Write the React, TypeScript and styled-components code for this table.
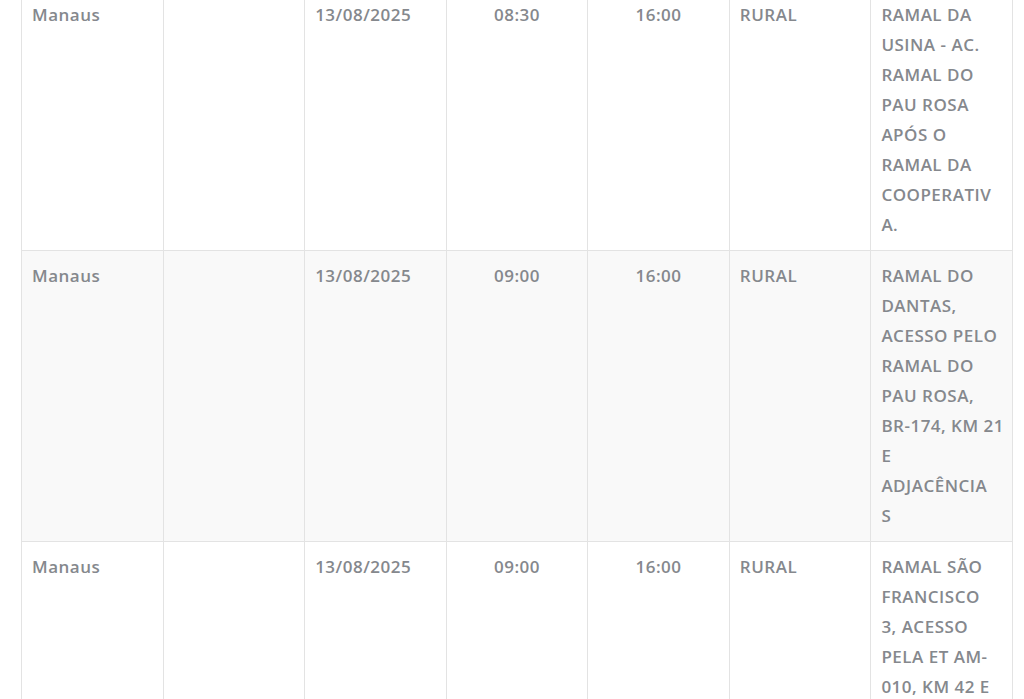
import React from "react";
import styled, { createGlobalStyle } from "styled-components";

const Global = createGlobalStyle`
  html, body { margin: 0; padding: 0; background: #ffffff; }
  body { font-family: "Open Sans", "Noto Sans", Arial, sans-serif; }
`;

const Page = styled.div`
  padding: 0 12px 0 21px;
  margin-top: -11px;
  overflow: hidden;
  height: 710px;
`;

const Table = styled.table`
  width: 992px;
  table-layout: fixed;
  border-collapse: collapse;
  font-family: "Open Sans", "Noto Sans", Arial, sans-serif;
  font-size: 17px;
  line-height: 30px;
  color: #85888d;
`;

const Row = styled.tr<{ $shaded?: boolean }>`
  background: ${(p) => (p.$shaded ? "#f9f9f9" : "#ffffff")};
`;

const Cell = styled.td<{ $center?: boolean }>`
  border: 1px solid #e3e3e3;
  padding: 10px 10px;
  vertical-align: top;
  text-align: ${(p) => (p.$center ? "center" : "left")};
  font-weight: 600;
  letter-spacing: 0.5px;
`;

const Line = styled.span`
  display: block;
  white-space: nowrap;
`;

type Entry = {
  city: string;
  date: string;
  start: string;
  end: string;
  zone: string;
  place: string[];
};

const rows: Entry[] = [
  {
    city: "Manaus",
    date: "13/08/2025",
    start: "08:30",
    end: "16:00",
    zone: "RURAL",
    place: ["RAMAL DA", "USINA - AC.", "RAMAL DO", "PAU ROSA", "APÓS O", "RAMAL DA", "COOPERATIV", "A."],
  },
  {
    city: "Manaus",
    date: "13/08/2025",
    start: "09:00",
    end: "16:00",
    zone: "RURAL",
    place: ["RAMAL DO", "DANTAS,", "ACESSO PELO", "RAMAL DO", "PAU ROSA,", "BR-174, KM 21", "E", "ADJACÊNCIA", "S"],
  },
  {
    city: "Manaus",
    date: "13/08/2025",
    start: "09:00",
    end: "16:00",
    zone: "RURAL",
    place: ["RAMAL SÃO", "FRANCISCO", "3, ACESSO", "PELA ET AM-", "010, KM 42 E", "ADJACÊNCIA", "S"],
  },
];

export default function App() {
  return (
    <>
      <Global />
      <Page>
        <Table>
          <tbody>
            {rows.map((r, i) => (
              <Row key={i} $shaded={i % 2 === 1}>
                <Cell>{r.city}</Cell>
                <Cell></Cell>
                <Cell>{r.date}</Cell>
                <Cell $center>{r.start}</Cell>
                <Cell $center>{r.end}</Cell>
                <Cell>{r.zone}</Cell>
                <Cell>
                  {r.place.map((l, j) => (
                    <Line key={j}>{l}</Line>
                  ))}
                </Cell>
              </Row>
            ))}
          </tbody>
        </Table>
      </Page>
    </>
  );
}
